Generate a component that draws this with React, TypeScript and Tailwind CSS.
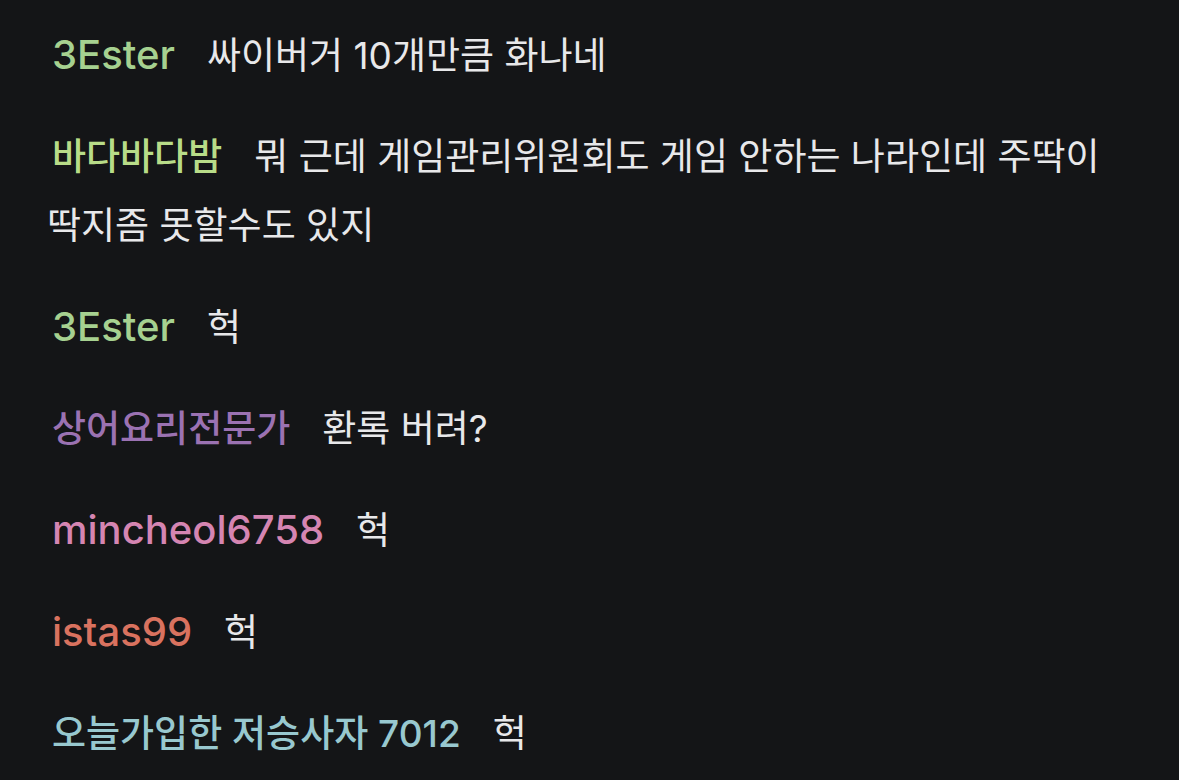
import React from 'react';

type Chat = {
  name: string;
  color: string;
  size: string;
  text: string;
};

const chats: Chat[] = [
  { name: '3Ester', color: 'text-[#a6d190]', size: 'text-[40px]', text: '싸이버거 10개만큼 화나네' },
  { name: '바다바다밤', color: 'text-[#b8dc88]', size: 'text-[37px]', text: '뭐 근데 게임관리위원회도 게임 안하는 나라인데 주딱이 딱지좀 못할수도 있지' },
  { name: '3Ester', color: 'text-[#a6d190]', size: 'text-[40px]', text: '헉' },
  { name: '상어요리전문가', color: 'text-[#9b72b2]', size: 'text-[37px]', text: '환록 버려?' },
  { name: 'mincheol6758', color: 'text-[#d585b2]', size: 'text-[40px]', text: '헉' },
  { name: 'istas99', color: 'text-[#d9725f]', size: 'text-[40px]', text: '헉' },
  { name: '오늘가입한 저승사자 7012', color: 'text-[#98c8cf]', size: 'text-[37px]', text: '헉' },
];

export default function App() {
  return (
    <div className="min-h-screen w-full bg-[#141517] pl-[47px] pr-[47px] pt-[20px] font-['Inter','Noto_Sans_CJK_KR',sans-serif]">
      <div className="flex flex-col gap-[32px]">
        {chats.map((c, i) => (
          <p key={i} className="text-[37px] leading-[69px] text-[#e8e8ea] break-keep">
            {/* nickname */}
            <span className={`inline-block pl-[5px] mr-[32px] font-medium ${c.color} ${c.size}`}>
              {c.name}
            </span>
            <span>{c.text}</span>
          </p>
        ))}
      </div>
    </div>
  );
}
